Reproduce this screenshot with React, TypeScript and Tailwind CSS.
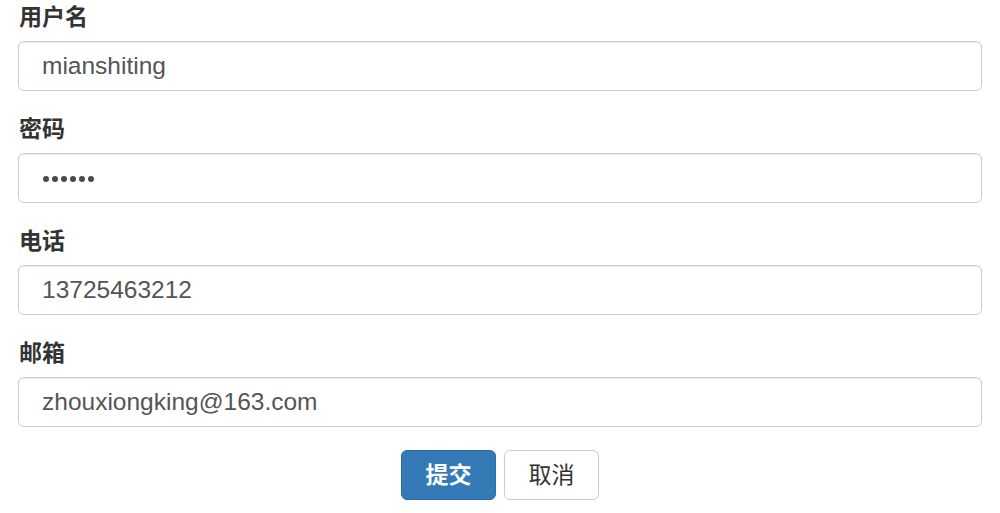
import React from "react";

const fields = [
  { label: "用户名", value: "mianshiting", type: "text" },
  { label: "密码", value: "", type: "password" },
  { label: "电话", value: "13725463212", type: "text" },
  { label: "邮箱", value: "zhouxiongking@163.com", type: "text" },
];

export default function App() {
  return (
    <div
      className="w-[1000px] h-[513px] bg-white overflow-hidden px-[18px] pt-[2px]"
      style={{ fontFamily: '"Liberation Sans", "Noto Sans CJK SC", Arial, sans-serif' }}
    >
      {fields.map((f) => (
        <div key={f.label} className="mb-[23px]">
          <div className="h-[30px] leading-[30px] mb-[9px] text-[23px] font-bold text-[#333] pl-px">
            {f.label}
          </div>
          <div className="h-[50px] w-[964px] rounded-[6px] border border-[#cccccc] bg-white shadow-[inset_0_1px_1px_rgba(0,0,0,0.075)] flex items-center pl-[23px]">
            {f.type === "password" ? (
              <div className="flex items-center gap-[3.5px] pl-[1px] pt-[2px]">
                {[0, 1, 2, 3, 4, 5].map((i) => (
                  <span key={i} className="block w-[5.5px] h-[5.5px] rounded-full bg-[#4a4a4a]" />
                ))}
              </div>
            ) : (
              <span className="text-[24.5px] text-[#555]">{f.value}</span>
            )}
          </div>
        </div>
      ))}
      <div className="flex justify-center gap-[8px] mt-[4px]">
        <button className="w-[95px] h-[50px] rounded-[6px] bg-[#337ab7] border border-[#2e6da4] text-white text-[23px] font-bold">
          提交
        </button>
        <button className="w-[95px] h-[50px] rounded-[6px] bg-white border border-[#cccccc] text-[#333] text-[23px]">
          取消
        </button>
      </div>
    </div>
  );
}
